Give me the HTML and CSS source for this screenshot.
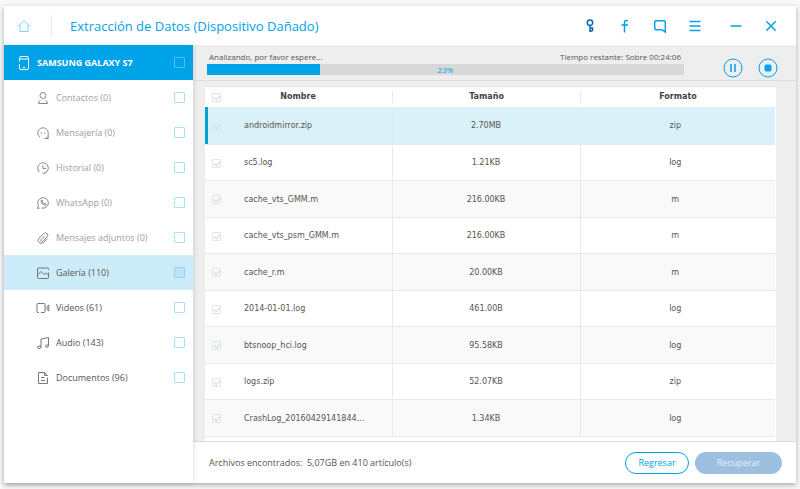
FILE: index.html
```html
<!DOCTYPE html>
<html lang="es">
<head>
<meta charset="UTF-8">
<meta name="viewport" content="width=device-width, initial-scale=1.0">
<title>Extracción de Datos (Dispositivo Dañado)</title>
<link rel="stylesheet" href="styles.css">
</head>
<body>

<div class="window">

  <header class="topbar">
    <a class="home" href="#" aria-label="Inicio">
      <svg width="14" height="14" viewBox="0 0 14 14"><path d="M1 7.500 7 1.300l6 6.200M3 6v6.500h8V6"/></svg>
    </a>
    <h1>Extracción de Datos (Dispositivo Dañado)</h1>
    <nav class="tools">
      <button class="key" aria-label="Registro"><svg width="14" height="14" viewBox="0 0 14 14"><circle cx="7" cy="3.700" r="2.700"/><path d="M7 6.400V13M7 12h2.500M7 9h2.500v3"/></svg></button>
      <button aria-label="Facebook"><svg width="14" height="14" viewBox="0 0 14 14"><path d="M10 1.500H8.500Q6.500 1.500 6.500 3.500V13.500M3.500 6H10"/></svg></button>
      <button aria-label="Comentarios"><svg width="14" height="14" viewBox="0 0 14 14"><path d="M12.300 13V3.200q0-1.500-1.500-1.500H3.200Q1.700 1.700 1.700 3.200v6q0 1.500 1.500 1.500h5.600z"/></svg></button>
      <button aria-label="Menú"><svg width="14" height="14" viewBox="0 0 14 14"><path d="M1.500 2.500h11M1.500 7h11M1.500 11.500h11"/></svg></button>
      <button class="min" aria-label="Minimizar"><svg width="14" height="14" viewBox="0 0 14 14"><path d="M1.500 7h11"/></svg></button>
      <button aria-label="Cerrar"><svg width="14" height="14" viewBox="0 0 14 14"><path d="M2.300 2.300l9.400 9.400M11.700 2.300l-9.400 9.400"/></svg></button>
    </nav>
  </header>

  <div class="body">

    <aside class="sidebar">
      <label class="device">
        <svg width="12" height="16" viewBox="0 0 12 16"><path d="M1.500 6.500V3q0-1.500 1.500-1.500h6Q10.500 1.500 10.500 3v10q0 1.500-1.500 1.500H3q-1.500 0-1.500-1.500V9M1.500 4h9M5 12.500h2"/></svg>
        <span>SAMSUNG GALAXY S7</span>
        <input type="checkbox">
      </label>
      <label class="item off">
        <svg width="14" height="14" viewBox="0 0 14 14"><circle cx="7" cy="4.500" r="3"/><path d="M4.500 9.500Q2.500 10 2.500 12.500h9Q11.500 10 9.500 9.500"/></svg>
        <span>Contactos (0)</span>
        <input type="checkbox">
      </label>
      <label class="item off">
        <svg width="14" height="14" viewBox="0 0 14 14"><path d="M4 11.300A5.200 5.200 0 1 1 12.200 7v5.500H8.500M4.800 7h1.200M8 7h1.200M12.200 12.500l-1.800-1.800"/></svg>
        <span>Mensajería (0)</span>
        <input type="checkbox">
      </label>
      <label class="item off">
        <svg width="14" height="14" viewBox="0 0 14 14"><path d="M3.500 11A5.300 5.300 0 1 1 6.500 12.300M10.500 11l-1.500 1M7 4v3.500h3"/></svg>
        <span>Historial (0)</span>
        <input type="checkbox">
      </label>
      <label class="item off">
        <svg width="14" height="14" viewBox="0 0 14 14"><path d="M5.500 12A5.300 5.300 0 1 0 2.300 9.300L1.500 12.500l2.200-.5M5 4.500Q5.200 8.500 9.500 9.500l.7-1.500-1.500-.7-.8.700Q6.700 7.300 6.200 6l.7-.7L6 4z"/></svg>
        <span>WhatsApp (0)</span>
        <input type="checkbox">
      </label>
      <label class="item off">
        <svg width="14" height="14" viewBox="0 0 14 14"><path d="M11.500 7.500 7.500 11.500Q5 13.500 3 11.500T3 7.200L7.500 2.700Q9.500 1 11.200 2.500T11 6L6.800 10.300Q5.700 11 5 10.200T5 8.500L8.700 4.800"/></svg>
        <span>Mensajes adjuntos (0)</span>
        <input type="checkbox">
      </label>
      <label class="item active">
        <svg width="14" height="14" viewBox="0 0 14 14"><path d="M12.500 4V3q0-1-1-1h-9q-1 0-1 1v8.500q0 1 1 1h9q1 0 1-1V6.500M1.500 9l3.500-3.500 3 3L10 7l2.500 2"/></svg>
        <span>Galería (110)</span>
        <input type="checkbox">
      </label>
      <label class="item">
        <svg width="14" height="14" viewBox="0 0 14 14"><path d="M3 11.500H2q-1 0-1-1v-7q0-1 1-1h6q1 0 1 1v7q0 1-1 1H5M11 5.500l1.800-1.500v6L11 8.500z"/></svg>
        <span>Videos (61)</span>
        <input type="checkbox">
      </label>
      <label class="item">
        <svg width="14" height="14" viewBox="0 0 14 14"><path d="M5 11.500V3L12.500 1.500V10M5 11Q4.500 12.500 3 12.500T1.500 11.300 3 10H5M12.500 9.500Q12.300 11.300 11 11.300T9.500 10.200 11 9h1.500"/></svg>
        <span>Audio (143)</span>
        <input type="checkbox">
      </label>
      <label class="item">
        <svg width="14" height="14" viewBox="0 0 14 14"><path d="M11.500 6.500v6h-9v-11H8.500L11.500 4.500M8.500 1.500v3h3M5 6.500h3.500M5 9.500h4"/></svg>
        <span>Documentos (96)</span>
        <input type="checkbox">
      </label>
    </aside>

    <main class="main">

      <section class="scan">
        <div class="progress">
          <div class="status"><span>Analizando, por favor espere...</span><span>Tiempo restante: Sobre 00:24:06</span></div>
          <div class="bar"><div class="fill"></div><span class="pct">23%</span></div>
        </div>
        <button class="round" aria-label="Pausar"><svg width="20" height="20" viewBox="0 0 20 20"><circle cx="10" cy="10" r="9"/><path class="thick" d="M8 6v8M12 6v8"/></svg></button>
        <button class="round" aria-label="Detener"><svg width="20" height="20" viewBox="0 0 20 20"><circle cx="10" cy="10" r="9"/><rect class="solid" x="7" y="7" width="6" height="6" rx="1"/></svg></button>
      </section>

      <section class="list">
        <table>
          <colgroup><col class="c-check"><col class="c-name"><col class="c-size"><col class="c-type"></colgroup>
          <thead>
            <tr><th><input type="checkbox" checked aria-label="Seleccionar todo"></th><th class="name"><span>Nombre</span></th><th><span>Tamaño</span></th><th><span>Formato</span></th></tr>
          </thead>
          <tbody>
            <tr class="sel"><td><input type="checkbox" checked aria-label="androidmirror.zip"></td><td>androidmirror.zip</td><td>2.70MB</td><td>zip</td></tr>
            <tr><td><input type="checkbox" checked aria-label="sc5.log"></td><td>sc5.log</td><td>1.21KB</td><td>log</td></tr>
            <tr><td><input type="checkbox" checked aria-label="cache_vts_GMM.m"></td><td>cache_vts_GMM.m</td><td>216.00KB</td><td>m</td></tr>
            <tr><td><input type="checkbox" checked aria-label="cache_vts_psm_GMM.m"></td><td>cache_vts_psm_GMM.m</td><td>216.00KB</td><td>m</td></tr>
            <tr><td><input type="checkbox" checked aria-label="cache_r.m"></td><td>cache_r.m</td><td>20.00KB</td><td>m</td></tr>
            <tr><td><input type="checkbox" checked aria-label="2014-01-01.log"></td><td>2014-01-01.log</td><td>461.00B</td><td>log</td></tr>
            <tr><td><input type="checkbox" checked aria-label="btsnoop_hci.log"></td><td>btsnoop_hci.log</td><td>95.58KB</td><td>log</td></tr>
            <tr><td><input type="checkbox" checked aria-label="logs.zip"></td><td>logs.zip</td><td>52.07KB</td><td>zip</td></tr>
            <tr><td><input type="checkbox" checked aria-label="CrashLog_20160429141844..."></td><td>CrashLog_20160429141844...</td><td>1.34KB</td><td>log</td></tr>
          </tbody>
        </table>
      </section>

      <footer class="footer">
        <p>Archivos encontrados:&nbsp; 5,07GB en 410 artículo(s)</p>
        <button class="btn back">Regresar</button>
        <button class="btn recover">Recuperar</button>
      </footer>

    </main>
  </div>
</div>

</body>
</html>
```

FILE: styles.css
```css
:root{
  --blue:#00a2e8;
  --light:#a9dff7;
  --line:#e9e9e9;
}

*{margin:0;padding:0;box-sizing:border-box}
body{font-family:'Open Sans','Noto Sans',sans-serif;font-size:9px;line-height:14px;color:#555;background:#f7f7f7;padding:6px 4px}
button{background:none;border:none;font:inherit;color:inherit;cursor:pointer}
svg{display:block;fill:none;stroke:currentColor;stroke-width:1}

.window{display:flex;flex-direction:column;min-height:calc(100vh - 12px);background:#fff;box-shadow:0 2px 5px rgba(0,0,0,.3)}

/* ---------------- Top bar ---------------- */
.topbar{display:flex;align-items:center;height:39px;color:var(--blue)}
.home{display:flex;justify-content:center;width:48px;padding:4px 8px 4px 0;border-right:1px solid var(--line);color:#84d0f5}
.topbar h1{flex:1;padding-left:18px;font-size:13px;line-height:20px;font-weight:400}
.tools{display:flex;gap:21px;padding-right:18px}
.tools svg{stroke-width:1.5}
.tools .min{margin-left:6px}
.tools .key{color:#0a66b2}

/* ---------------- Sidebar ---------------- */
.body{display:flex;flex:1}
.sidebar{flex:0 0 189px;z-index:1;background:#fff;box-shadow:1px 0 5px rgba(0,0,0,.12)}
.device,.item{display:flex;align-items:center;height:35px;padding-right:8px}
.device span,.item span{flex:1}
.device{padding-left:14px;gap:7px;background:var(--blue);color:#fff;font-weight:700}
.item{padding-left:32px;gap:6px}
.item svg{color:#777}
.off{color:#a0a0a0}
.off svg{color:#888}
.active{background:#cdecfa}

input[type=checkbox]{appearance:none;position:relative;width:11px;height:11px;border:1px solid var(--light);border-radius:1px}
.device input{border-color:#4fc0f0}
.active input{border-color:#8fd4f3;background:#bce5f8}

/* ---------------- Scan progress ---------------- */
.main{display:flex;flex-direction:column;flex:1;min-width:0;background:#eee}
.scan{display:flex;align-items:center;gap:15px;height:36px;padding:0 18px 0 14px;border-bottom:1px solid #ddd}
.progress{flex:1;margin-right:24px}
.status{display:flex;justify-content:space-between;padding:0 3px 0 2px;font-size:8px}
.bar{position:relative;height:11px;background:#d8d8d8}
.fill{width:23.6%;height:100%;background:var(--blue)}
.pct{position:absolute;inset:0;font-size:8px;line-height:11px;text-align:center;color:var(--blue)}
.round{color:var(--blue);padding-top:10px}
.round .thick{stroke-width:1.5}
.round .solid{fill:currentColor}

/* ---------------- File list ---------------- */
.list{flex:1;margin:5px 20px 0 12px;padding:0 1px 3px 0;background:#fff;border-top:1px solid #e4e4e4}
table{width:100%;table-layout:fixed;border-collapse:collapse;font-family:'DejaVu Sans',sans-serif;font-size:8px;line-height:12px;color:#555}
.c-check{width:30px}
.c-name{width:157px}
.c-size{width:188px}
th{height:20px;color:#444;text-align:center}
th span{display:block}
th.name{padding-right:31px}
tbody tr{height:36px;border-bottom:1px solid var(--line)}
tbody tr:nth-child(odd){height:37px;background:#f9f9f9}
td{padding-top:2px;text-align:center}
td:nth-child(2){text-align:left;padding-left:9px}
td:nth-child(4){padding-right:5px}
td:nth-child(n+3),th:nth-child(n+3) span{border-left:1px solid var(--line)}
tbody tr.sel{background:#daf1fa}
.sel td:first-child{box-shadow:inset 3px 0 #00a0d2}
table input[type=checkbox]{display:block;width:9px;height:9px;margin-left:7px;border-color:#dde7ea}
table input:checked::after{content:"";position:absolute;left:1px;top:1px;width:5px;height:3px;border:solid #cbdade;border-width:0 0 1px 1px;transform:rotate(-45deg)}

/* ---------------- Footer ---------------- */
.footer{display:flex;align-items:center;gap:6px;height:42px;padding:0 14px 0 16px;background:#fff;border-top:1px solid #ddd}
.footer p{flex:1}
.btn{width:64px;height:22px;border-radius:11px}
.back{border:1px solid var(--blue);color:var(--blue)}
.recover{width:87px;background:#9dbfe0;color:#e4f0fa}
```
